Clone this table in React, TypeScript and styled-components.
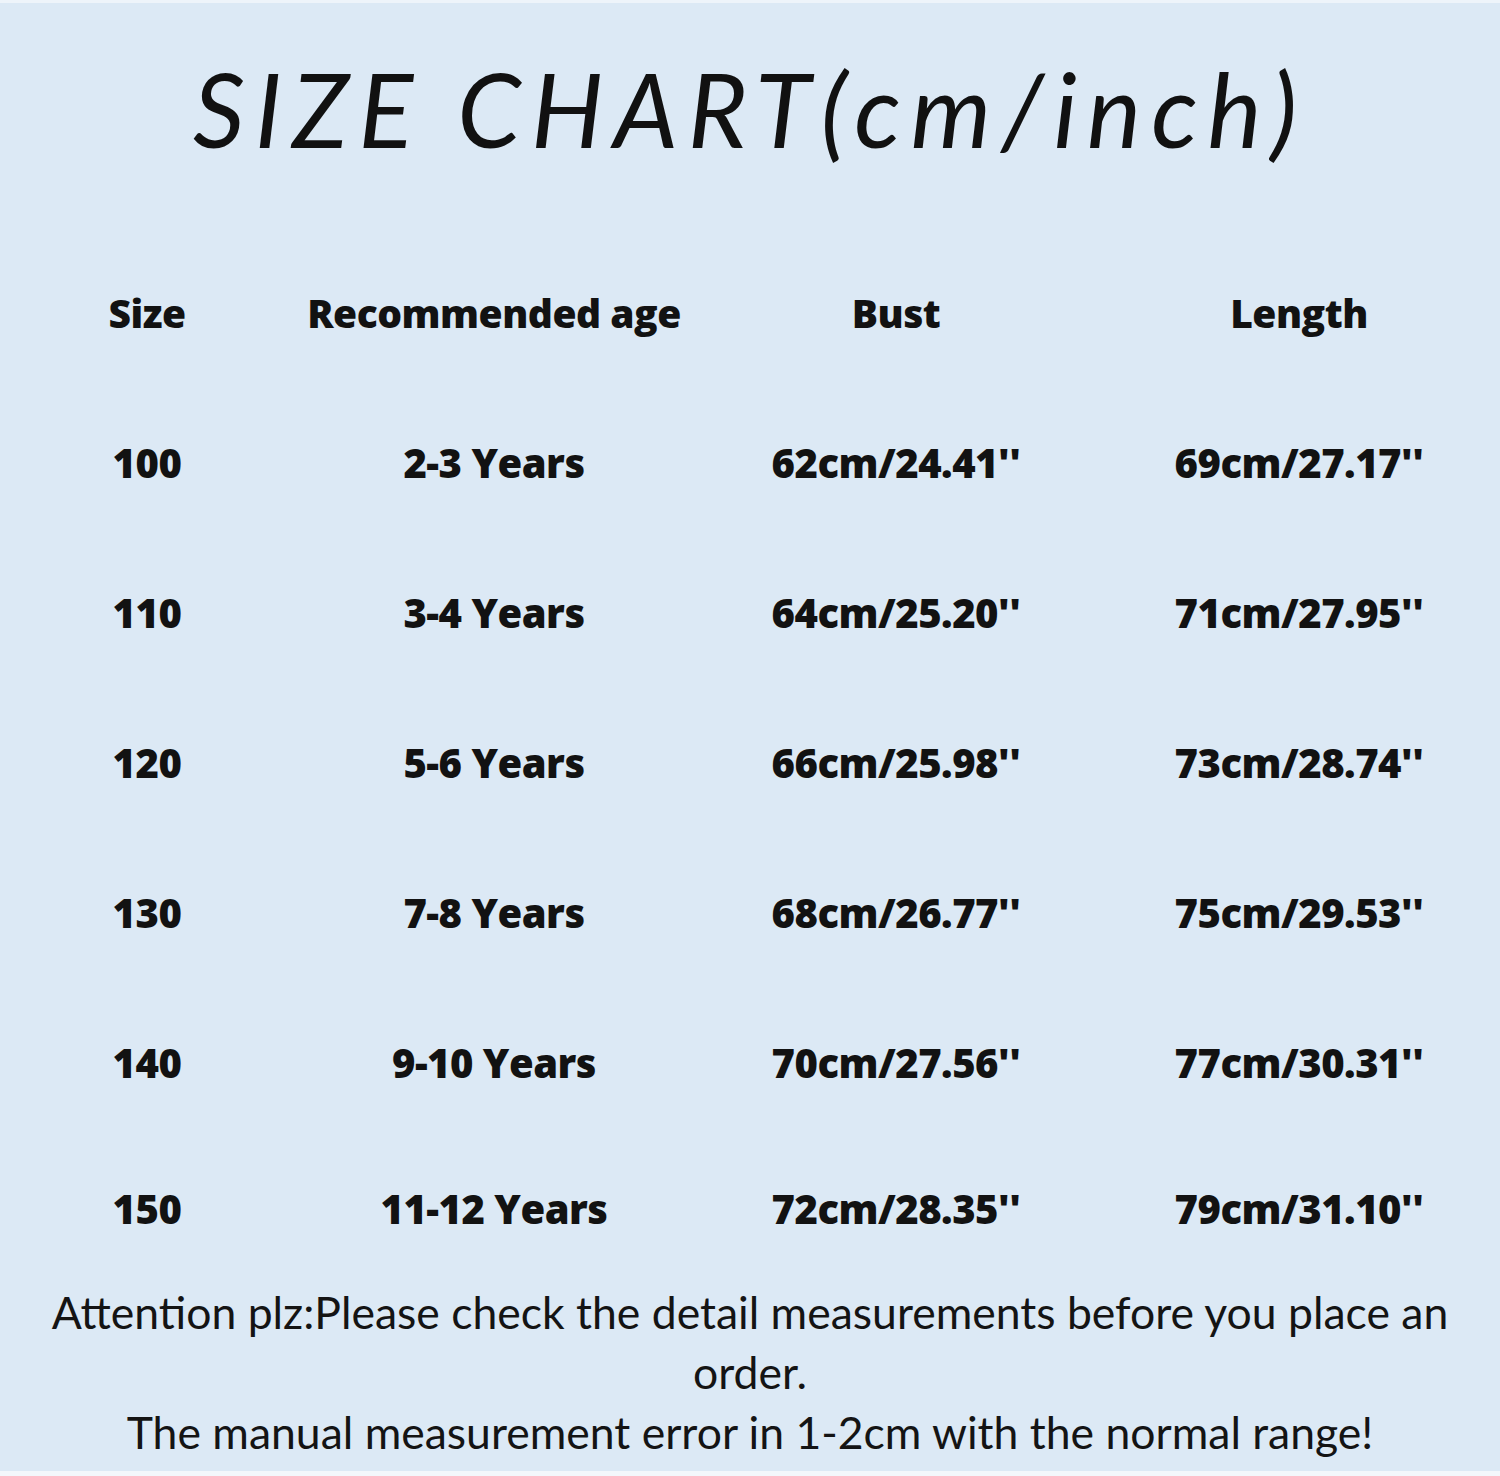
import React from 'react';
import styled, { createGlobalStyle } from 'styled-components';

const GlobalStyle = createGlobalStyle`
  html, body {
    margin: 0;
    padding: 0;
    background: #dce9f5;
  }
`;

const Page = styled.div`
  width: 1500px;
  height: 1476px;
  box-sizing: border-box;
  background: #dce9f5;
  border-top: 3px solid #eef4fa;
  border-bottom: 5px solid #f3f7fb;
  display: flex;
  flex-direction: column;
  align-items: center;
  overflow: hidden;
`;

const Title = styled.h1`
  margin: 0;
  height: 234px;
  box-sizing: border-box;
  padding-top: 46px;
  font-family: 'Lato', 'DejaVu Sans', sans-serif;
  font-style: italic;
  font-weight: 400;
  font-size: 102px;
  line-height: 120px;
  color: #111;
  letter-spacing: 10px;
`;

const Table = styled.div`
  width: 100%;
  display: grid;
  grid-template-columns: 294px 400px 404px 1fr;
  grid-template-rows: repeat(6, 150px) 142px;
`;

const Cell = styled.div<{ $head?: boolean }>`
  display: flex;
  align-items: center;
  justify-content: center;
  font-family: 'Open Sans', 'DejaVu Sans', sans-serif;
  font-weight: 800;
  font-size: ${(p) => (p.$head ? '39px' : '40px')};
  color: #121212;
  letter-spacing: -0.5px;
`;

const Note = styled.p`
  margin: 0;
  margin-top: 3px;
  width: 1420px;
  text-align: center;
  font-family: 'Lato', 'Liberation Sans', sans-serif;
  font-weight: 400;
  font-size: 44.5px;
  line-height: 60px;
  color: #141414;
`;

const headers = ['Size', 'Recommended age', 'Bust', 'Length'];

const rows = [
  ['100', '2-3 Years', "62cm/24.41''", "69cm/27.17''"],
  ['110', '3-4 Years', "64cm/25.20''", "71cm/27.95''"],
  ['120', '5-6 Years', "66cm/25.98''", "73cm/28.74''"],
  ['130', '7-8 Years', "68cm/26.77''", "75cm/29.53''"],
  ['140', '9-10 Years', "70cm/27.56''", "77cm/30.31''"],
  ['150', '11-12 Years', "72cm/28.35''", "79cm/31.10''"],
];

const App: React.FC = () => (
  <>
    <GlobalStyle />
    <Page>
      <Title>SIZE CHART(cm/inch)</Title>
      <Table>
        {headers.map((h) => (
          <Cell key={h} $head>
            {h}
          </Cell>
        ))}
        {rows.map((r) =>
          r.map((v, i) => <Cell key={r[0] + i}>{v}</Cell>)
        )}
      </Table>
      <Note>
        Attention plz:Please check the detail measurements before you place an order.
        <br />
        The manual measurement error in 1-2cm with the normal range!
      </Note>
    </Page>
  </>
);

export default App;
